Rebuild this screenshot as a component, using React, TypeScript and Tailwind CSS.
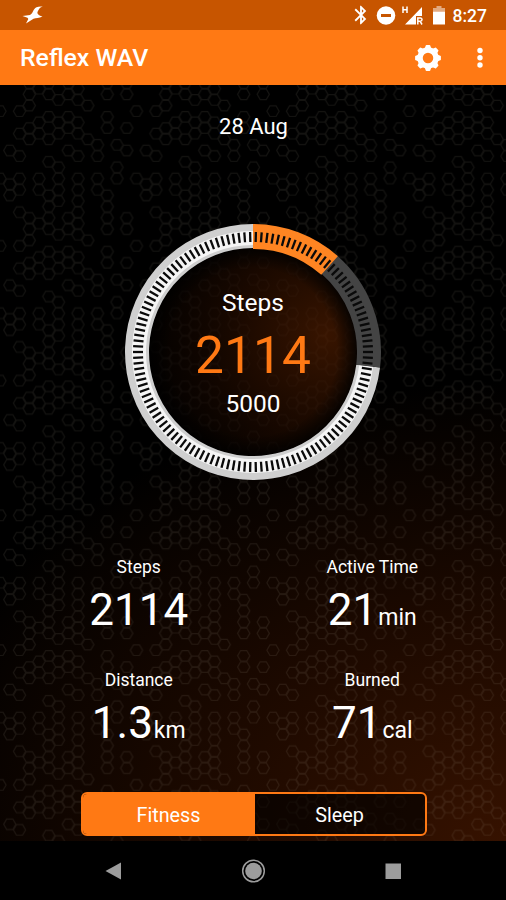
import React from "react";
import { MdBluetooth } from "react-icons/md";

interface Stat {
  label: string;
  value: string;
  unit?: string;
}

const stats: Stat[] = [
  { label: "Steps", value: "2114" },
  { label: "Active Time", value: "21", unit: "min" },
  { label: "Distance", value: "1.3", unit: "km" },
  { label: "Burned", value: "71", unit: "cal" },
];

// filled cells of the honeycomb tile, one list of rows per column
const cells: number[][] = [
  [2, 8],
  [5, 8, 9],
  [2, 4, 6, 8, 9, 11],
  [0, 1, 3, 4, 11],
  [0, 3, 4, 8, 9],
  [0, 2, 4, 6, 9, 10, 11],
  [1, 3, 4, 7, 8, 9, 10],
  [0, 2, 3, 5, 11],
  [0, 1, 3, 4, 6, 8, 9, 10, 11],
  [1, 4],
  [5, 6, 8, 9],
  [0, 2, 3, 9, 10, 11],
  [5, 7, 8],
  [0, 3, 5, 11],
];
const COL = 9.75;
const ROW = 11.23;
const TILE_W = COL * 14;
const TILE_H = ROW * 12;

const hexPoints = (cx: number, cy: number, r: number) =>
  [0, 60, 120, 180, 240, 300]
    .map((a) => {
      const t = (a * Math.PI) / 180;
      return `${(cx + r * Math.cos(t)).toFixed(2)},${(cy + r * Math.sin(t)).toFixed(2)}`;
    })
    .join(" ");

const hexes = cells.flatMap((rows, c) =>
  rows.flatMap((n) => {
    const x = c * COL;
    const y = 3.7 + n * ROW + (c % 2 ? ROW / 2 : 0);
    // cells on the tile edge are drawn again on the opposite side
    const xs = c === 0 ? [x, x + TILE_W] : c === 13 ? [x, x - TILE_W] : [x];
    const ys = n === 0 ? [y, y + TILE_H] : n === 11 ? [y, y - TILE_H] : [y];
    return xs.flatMap((px) => ys.map((py) => hexPoints(px, py, 6.1)));
  })
);

const Honeycomb: React.FC = () => (
  <svg className="absolute inset-0 h-full w-full" aria-hidden="true">
    <defs>
      <pattern id="honeycomb" width={TILE_W} height={TILE_H} patternUnits="userSpaceOnUse">
        {hexes.map((points, i) => (
          <polygon key={i} points={points} fill="none" stroke="#b8b09a" strokeWidth="1.2" />
        ))}
      </pattern>
    </defs>
    <rect width="100%" height="100%" fill="url(#honeycomb)" opacity="0.11" />
  </svg>
);

const polar = (r: number, deg: number) => {
  const t = (deg * Math.PI) / 180;
  return `${(130 + r * Math.sin(t)).toFixed(2)} ${(130 - r * Math.cos(t)).toFixed(2)}`;
};

const arc = (from: number, to: number, r: number) =>
  `M${polar(r, from)} A${r} ${r} 0 ${to - from > 180 ? 1 : 0} 1 ${polar(r, to)}`;

const TICKS = 130;

const Dial: React.FC = () => (
  <div className="relative h-[260px] w-[260px]">
    <svg viewBox="0 0 260 260" className="absolute inset-0 h-full w-full" fill="none">
      <defs>
        <radialGradient id="glow" cx="0.85" cy="0.42" r="0.85">
          <stop offset="0" stopColor="#4a1b00" stopOpacity="0.75" />
          <stop offset="0.5" stopColor="#260d00" stopOpacity="0.7" />
          <stop offset="1" stopColor="#080200" stopOpacity="0.5" />
        </radialGradient>
        <radialGradient id="rim" cx="0.5" cy="0.5" r="0.5">
          <stop offset="0.8" stopColor="#000" stopOpacity="0" />
          <stop offset="1" stopColor="#000" stopOpacity="0.85" />
        </radialGradient>
      </defs>
      <circle cx="130" cy="130" r="105" fill="url(#glow)" />
      <circle cx="130" cy="130" r="105" fill="url(#rim)" />
      <path d={arc(97, 360, 116)} stroke="#cfcfcf" strokeWidth="24" />
      <path d={arc(97, 360, 114)} stroke="#f5f5f5" strokeWidth="14" />
      <path d={arc(41, 97, 116)} stroke="#444" strokeWidth="24" />
      <path d={arc(0, 41.5, 115.5)} stroke="#ff8522" strokeWidth="25" />
      {Array.from({ length: TICKS }, (_, i) => {
        const deg = ((i + 0.5) * 360) / TICKS;
        return <path key={i} d={`M${polar(110, deg)} L${polar(120, deg)}`} stroke="#0a0a0a" strokeWidth="2.3" />;
      })}
    </svg>
    <div className="relative flex flex-col items-center pt-[65px]">
      <p className="text-[24.5px] leading-[32px]">Steps</p>
      <p className="mt-[5px] text-[51.5px] leading-[64px] text-[#ff7914]">2114</p>
      <p className="text-[24.5px] leading-[32px]">5000</p>
    </div>
  </div>
);

const GearIcon: React.FC<{ className?: string }> = ({ className }) => (
  <svg width="28" height="28" viewBox="0 0 28 28" className={className} stroke="#fff" fill="none">
    <circle cx="14" cy="14" r="8" strokeWidth="5.500" />
    {[0, 45, 90, 135, 180, 225, 270, 315].map((a) => (
      <path key={a} d="M11.700 4.500 L12.500 2 H15.500 L16.300 4.500Z" fill="#fff" strokeWidth="1.800" strokeLinejoin="round" transform={`rotate(${a} 14 14)`} />
    ))}
  </svg>
);

const StatusBar: React.FC = () => (
  <div className="flex h-[30px] items-center bg-[#c75500] pr-[19px] pl-[22px]">
    <svg width="22" height="18" viewBox="0 0 22 18" fill="#fff">
      <path d="M21 0.500 C18 1.300 16.500 3 15.300 7 C16 9 18 9.700 20.500 10.500 C17 12 14 12 11.500 12.800 L4 17.500 L6.300 13 L5.500 11.800 L0.500 10 L8 9 C11 7.500 11 3 14.500 1.200 C16.500 0.300 18.500 0.300 21 0.500Z" />
    </svg>
    <div className="ml-auto flex items-center">
      <MdBluetooth className="h-[22px] w-[22px]" />
      <svg width="20" height="20" viewBox="0 0 20 20" className="ml-[4px]">
        <circle cx="10" cy="10.500" r="9.300" fill="#fff" />
        <rect x="5" y="9" width="10" height="3" fill="#c75500" />
      </svg>
      <svg width="22" height="20" viewBox="0 0 22 20" className="ml-[6px]" fill="#fff">
        <path d="M1 1.500v6.500M5 1.500v6.500M1 4.700h4" stroke="#fff" strokeWidth="1.500" />
        <path d="M20 2V11h-6v8.500H3z" />
        <path d="M15.800 19.500v-6.500h2.600a1.600 1.600 0 0 1 0 3.200h-2.600M18 16.200l2 3.300" fill="none" stroke="#fff" strokeWidth="1.500" />
      </svg>
      <svg width="12" height="20" viewBox="0 0 12 20" className="ml-[9px]" fill="#fff">
        <path d="M3.500 1h5v2H12v3.500H0V3h3.500z" opacity="0.5" />
        <path d="M0 6.500h12v13H0z" />
      </svg>
      <span className="ml-[8px] pt-[2px] text-[17.5px] leading-[20px] font-medium">8:27</span>
    </div>
  </div>
);

const App: React.FC = () => {
  return (
    <main className="flex h-[900px] w-[506px] flex-col overflow-hidden bg-black font-[Roboto,sans-serif] text-white">
      <StatusBar />
      <header className="flex h-[55px] items-center bg-[#ff7914] pr-[22px] pl-[20px]">
        <h1 className="text-[24.8px] leading-[32px] font-medium">Reflex WAV</h1>
        <GearIcon className="ml-auto" />
        <svg width="8" height="22" viewBox="0 0 8 22" className="ml-[34px]" fill="#fff">
          <circle cx="4" cy="3.500" r="2.700" />
          <circle cx="4" cy="10.800" r="2.700" />
          <circle cx="4" cy="18" r="2.700" />
        </svg>
      </header>

      <section className="relative h-[756px] bg-black bg-[radial-gradient(ellipse_620px_460px_at_100%_100%,#361200_0%,#1c0900_50%,#000_100%)]">
        <Honeycomb />
        <div className="relative flex flex-col items-center">
          <p className="mt-[26px] ml-px text-[22px] leading-[32px]">28 Aug</p>
          <div className="mt-[79px]">
            <Dial />
          </div>

          <div className="mt-[71px] ml-[5px] grid w-[467px] grid-cols-2">
            {stats.map((stat) => (
              <div key={stat.label} className="flex h-[113px] flex-col items-center">
                <p className="text-[17.5px] leading-[28px]">{stat.label}</p>
                <p className="mt-px text-[44px] leading-[56px]">
                  {stat.value}
                  {stat.unit && <span className="ml-px text-[23px]">{stat.unit}</span>}
                </p>
              </div>
            ))}
          </div>

          {/* Tabs */}
          <div className="mt-[13px] ml-px flex h-[44px] w-[346px] overflow-hidden rounded-[6px] border-2 border-[#ff7914] bg-black/60 text-[19.8px]">
            <button className="w-[172px] bg-[#ff7914] pt-[4px]">Fitness</button>
            <button className="flex-1 pt-[4px]">Sleep</button>
          </div>
        </div>
      </section>

      <nav className="flex flex-1 items-center bg-black">
        <svg width="506" height="30" viewBox="0 0 506 30" fill="#9c9c9c">
          <path d="M105.500 15 L121 6.500 V23.500Z" />
          <circle cx="253.500" cy="15" r="8.300" />
          <circle cx="253.500" cy="15" r="10.800" fill="none" stroke="#9c9c9c" strokeWidth="1.500" />
          <rect x="385.500" y="7.500" width="15.500" height="15.500" />
        </svg>
      </nav>
    </main>
  );
};

export default App;
